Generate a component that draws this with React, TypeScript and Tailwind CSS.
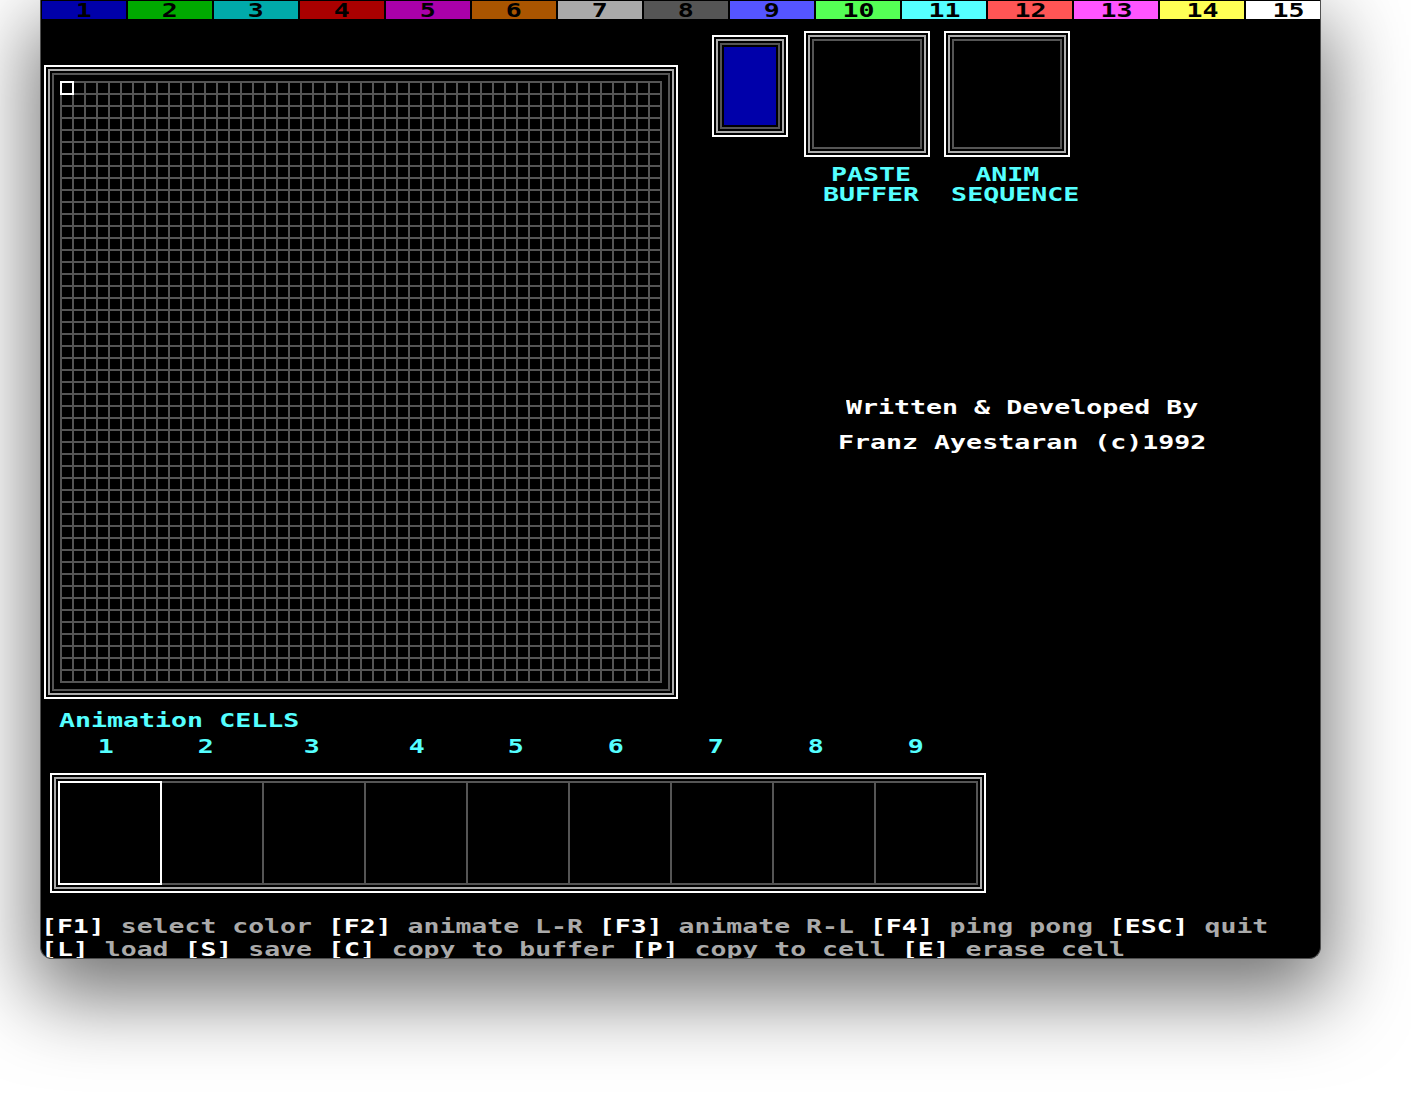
import React from "react";

const FONT =
  "font-['DejaVu_Sans_Mono',monospace] font-bold text-[19px] leading-none whitespace-pre scale-x-[1.4]";
const HELP_FONT =
  "font-['DejaVu_Sans_Mono',monospace] font-bold text-[19px] leading-none whitespace-pre scale-x-[1.393] origin-left";

function T({ className = "", children }: { className?: string; children: React.ReactNode }) {
  return <div className={`${FONT} origin-left ${className}`}>{children}</div>;
}

function Frame({
  className = "",
  innerClass = "",
  children,
}: {
  className?: string;
  innerClass?: string;
  children?: React.ReactNode;
}) {
  return (
    <div className={`border-2 border-white shrink-0 ${className}`}>
      <div className="border-2 border-black h-full">
        <div className="border-2 border-[#aaaaaa] h-full">
          <div className="border-2 border-black h-full">
            <div className={`border-2 border-[#555555] h-full ${innerClass}`}>{children}</div>
          </div>
        </div>
      </div>
    </div>
  );
}

const BAR: [string, string][] = [
  ["bg-[#0000aa]", "1"],
  ["bg-[#00aa00]", "2"],
  ["bg-[#00aaaa]", "3"],
  ["bg-[#aa0000]", "4"],
  ["bg-[#aa00aa]", "5"],
  ["bg-[#aa5500]", "6"],
  ["bg-[#aaaaaa]", "7"],
  ["bg-[#555555]", "8"],
  ["bg-[#5555ff]", "9"],
  ["bg-[#55ff55]", "10"],
  ["bg-[#55ffff]", "11"],
  ["bg-[#ff5555]", "12"],
  ["bg-[#ff55ff]", "13"],
  ["bg-[#ffff55]", "14"],
  ["bg-[#ffffff]", "15"],
];

const NUM_MARGINS = ["ml-[55px]", "ml-[80px]", "ml-[86px]", "ml-[85px]", "ml-[79px]", "ml-[80px]", "ml-[80px]", "ml-[80px]", "ml-[80px]"];

function K({ children }: { children: React.ReactNode }) {
  return <span className="text-white">{children}</span>;
}
function G({ children }: { children: React.ReactNode }) {
  return <span className="text-[#aaaaaa]">{children}</span>;
}

export default function App() {
  return (
    <div className="w-[1411px] h-[1107px] bg-white overflow-hidden">
      <div className="ml-[40px] w-[1281px] h-[959px] bg-black border-x border-b border-[#505050] rounded-b-[12px] overflow-hidden shadow-[0_30px_80px_8px_rgba(0,0,0,0.55)] flex flex-col">
        {/* colour bar */}
        <div className="flex gap-[2px] pl-[1px] pt-[1px] h-[19px] shrink-0">
          {BAR.map(([c, n]) => (
            <div key={n} className={`w-[84px] h-[18px] shrink-0 flex items-center justify-center ${c}`}>
              <div className={`${FONT} origin-center text-black`}>{n}</div>
            </div>
          ))}
        </div>

        {/* top row */}
        <div className="flex items-start h-[680px] shrink-0">
          <Frame className="ml-[3px] mt-[46px] w-[634px] h-[634px]" innerClass="p-[6px]">
            <div className="relative w-[602px] h-[602px] bg-[linear-gradient(to_right,#555555_2px,transparent_2px),linear-gradient(to_bottom,#555555_2px,transparent_2px)] bg-[length:12px_12px]">
              <div className="absolute left-0 top-0 w-[14px] h-[14px] border-2 border-white" />
            </div>
          </Frame>

          <div className="flex flex-col">
            <div className="flex items-start ml-[34px]">
              <Frame className="mt-[16px] w-[76px] h-[102px]" innerClass="p-[2px]">
                <div className="h-full bg-[#0000aa]" />
              </Frame>
              <Frame className="ml-[16px] mt-[12px] w-[126px] h-[126px]" />
              <Frame className="ml-[14px] mt-[12px] w-[126px] h-[126px]" />
            </div>
            <T className="ml-[153px] mt-[8px] text-[#55ffff]">{"PASTE    ANIM"}</T>
            <T className="ml-[145px] mt-[1px] text-[#55ffff]">{"BUFFER  SEQUENCE"}</T>
            <T className="ml-[168px] mt-[194px] text-white">{"Written & Developed By"}</T>
            <T className="ml-[160px] mt-[16px] text-white">{"Franz Ayestaran (c)1992"}</T>
          </div>
        </div>

        {/* animation cells */}
        <T className="ml-[18px] mt-[12px] text-[#55ffff]">{"Animation CELLS"}</T>
        <div className="flex mt-[7px]">
          {NUM_MARGINS.map((m, i) => (
            <div key={i} className={`w-[20px] flex justify-center ${m}`}>
              <div className={`${FONT} origin-center text-[#55ffff]`}>{String(i + 1)}</div>
            </div>
          ))}
        </div>

        <div className="ml-[9px] mt-[17px] w-[936px] h-[120px] border-2 border-white shrink-0">
          <div className="border-2 border-black h-full">
            <div className="border-2 border-[#aaaaaa] h-full">
              <div className="border-2 border-black h-full flex">
                {Array.from({ length: 9 }).map((_, i) => (
                  <div
                    key={i}
                    className={
                      i === 0
                        ? "relative z-10 w-[104px] h-[104px] shrink-0 border-2 border-white"
                        : "w-[104px] h-[104px] shrink-0 border-2 border-[#555555] -ml-[2px]"
                    }
                  />
                ))}
              </div>
            </div>
          </div>
        </div>

        {/* help */}
        <div className={`${HELP_FONT} ml-0 mt-[24px]`}>
          <K>[F1]</K> <G>select color</G> <K>[F2]</K> <G>animate L-R</G> <K>[F3]</K> <G>animate R-L</G>{" "}
          <K>[F4]</K> <G>ping pong</G> <K>[ESC]</K> <G>quit</G>
        </div>
        <div className={`${HELP_FONT} ml-0 mt-[4px]`}>
          <K>[L]</K> <G>load</G> <K>[S]</K> <G>save</G> <K>[C]</K> <G>copy to buffer</G> <K>[P]</K>{" "}
          <G>copy to cell</G> <K>[E]</K> <G>erase cell</G>
        </div>
      </div>
    </div>
  );
}
